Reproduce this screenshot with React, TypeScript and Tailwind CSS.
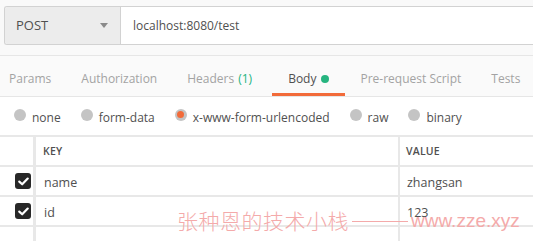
import React from "react";

const tabs = [
  { label: "Params", ml: "ml-[9px]" },
  { label: "Authorization", ml: "ml-[30px]" },
  { label: "Headers", ml: "ml-[30px]", badge: true },
  { label: "Body", ml: "ml-[20px]", active: true },
  { label: "Pre-request Script", ml: "ml-[15px]" },
  { label: "Tests", ml: "ml-[30px]" },
];

const radios = [
  { label: "none" },
  { label: "form-data" },
  { label: "x-www-form-urlencoded", selected: true },
  { label: "raw" },
  { label: "binary" },
];

function Check() {
  return (
    <div className="w-[16px] h-[16px] rounded-[3px] bg-[#282828] flex items-center justify-center">
      <svg width="11" height="9" viewBox="0 0 11 9">
        <path d="M1.3 4.6 L4.2 7.3 L9.7 1.6" fill="none" stroke="#fff" strokeWidth="2.2" strokeLinecap="round" strokeLinejoin="round" />
      </svg>
    </div>
  );
}

export default function App() {
  return (
    <div
      className="relative w-[533px] h-[241px] overflow-hidden bg-[#f9f9f9] text-[12px] text-[#505050]"
      style={{ fontFamily: '"Open Sans", "Noto Sans", sans-serif' }}
    >
      {/* URL bar */}
      <div className="pt-[6px] pl-[4px]">
        <div className="flex h-[39px] border border-[#d2d2d2] border-r-0 rounded-l-[3px] overflow-hidden">
          <div className="w-[116px] bg-[#ececec] border-r border-[#d2d2d2] flex items-center justify-between pl-[11px] pr-[12px]">
            <span className="text-[13px] text-[#505050]">POST</span>
            <svg width="8" height="5" viewBox="0 0 8 5">
              <path d="M0 0 L8 0 L4 5 Z" fill="#8a8a8a" />
            </svg>
          </div>
          <div className="flex-1 bg-white flex items-center pl-[12px]">
            <span className="text-[12px] text-[#505050]">localhost:8080/test</span>
          </div>
        </div>
      </div>

      {/* spacer */}
      <div className="h-[11px] border-b border-[#e6e6e6]" />

      {/* tabs */}
      <div className="h-[41px] bg-[#fafafa] border-b border-[#e6e6e6] flex items-stretch whitespace-nowrap">
        {tabs.map((t) => (
          <div
            key={t.label}
            className={`${t.ml} shrink-0 relative flex items-center pt-[5px] ${t.active ? "px-[16px] text-[#505050]" : "text-[#a3a3a3]"} text-[12px]`}
          >
            <span>{t.label}</span>
            {t.badge && <span className="ml-[4px] text-[#26b47f]">(1)</span>}
            {t.active && <span className="ml-[5px] w-[8px] h-[8px] rounded-full bg-[#26b47f]" />}
            {t.active && <div className="absolute left-0 right-0 bottom-[0px] h-[3px] bg-[#f26b3a]" />}
          </div>
        ))}
      </div>

      {/* radios */}
      <div className="h-[38px] bg-white flex items-center pl-[14px] pt-[3px] whitespace-nowrap">
        {radios.map((r, i) => (
          <div key={r.label} className={`flex items-center shrink-0 ${i > 0 ? "ml-[20px]" : ""}`}>
            <div className="w-[12px] h-[12px] rounded-full bg-[#c4c4c4] flex items-center justify-center -translate-y-[3px]">
              {r.selected && <div className="w-[7px] h-[7px] rounded-full bg-[#f26b3a]" />}
            </div>
            <span className="ml-[6px] text-[12px] text-[#505050]">{r.label}</span>
          </div>
        ))}
      </div>

      {/* table */}
      <div className="bg-white border-t-2 border-[#e8e8e8]">
        <div className="flex h-[30px] border-b-2 border-[#e8e8e8]">
          <div className="w-[36px] shrink-0 border-r-[3px] border-[#e8e8e8]" />
          <div className="w-[364px] shrink-0 border-r-2 border-[#e8e8e8] flex items-center pl-[7px] pt-[2px] text-[10.5px] font-semibold text-[#505050] tracking-[0.2px]">KEY</div>
          <div className="flex-1 flex items-center pl-[6px] pt-[2px] text-[10.5px] font-semibold text-[#505050] tracking-[0.2px]">VALUE</div>
        </div>
        {[
          ["name", "zhangsan"],
          ["id", "123"],
        ].map(([k, v]) => (
          <div key={k} className="flex h-[30px] border-b-2 border-[#e8e8e8]">
            <div className="w-[36px] shrink-0 border-r-[3px] border-[#e8e8e8] flex items-center justify-end pr-[2px]">
              <Check />
            </div>
            <div className="w-[364px] shrink-0 border-r-2 border-[#e8e8e8] flex items-center pl-[8px] pt-[4px] text-[12.5px] text-[#505050]">{k}</div>
            <div className="flex-1 flex items-center pl-[7px] pt-[4px] text-[12.5px] text-[#505050]">{v}</div>
          </div>
        ))}
        <div className="flex h-[30px]">
          <div className="w-[36px] shrink-0 border-r-[3px] border-[#e8e8e8]" />
          <div className="w-[364px] shrink-0 border-r-2 border-[#e8e8e8] flex items-center pl-[8px] pt-[22px] text-[12.5px] text-[#c8c8c8]">Key</div>
          <div className="flex-1 flex items-center pl-[7px] pt-[22px] text-[12.5px] text-[#c8c8c8]">Value</div>
        </div>
      </div>

      {/* watermark */}
      <div
        className="absolute left-[177px] top-[205px] flex items-center text-[#f4aaaa] whitespace-nowrap pointer-events-none"
        style={{ fontFamily: '"Noto Sans CJK SC", sans-serif' }}
      >
        <span className="text-[21px] font-light tracking-[0.5px]">张种恩的技术小栈</span>
        <span className="inline-block w-[56px] h-[1px] bg-[#f4aaaa] mx-[3px] mt-[2px]" />
        <span className="text-[19px] font-light" style={{ fontFamily: '"Liberation Sans", sans-serif' }}>www.zze.xyz</span>
      </div>
    </div>
  );
}
